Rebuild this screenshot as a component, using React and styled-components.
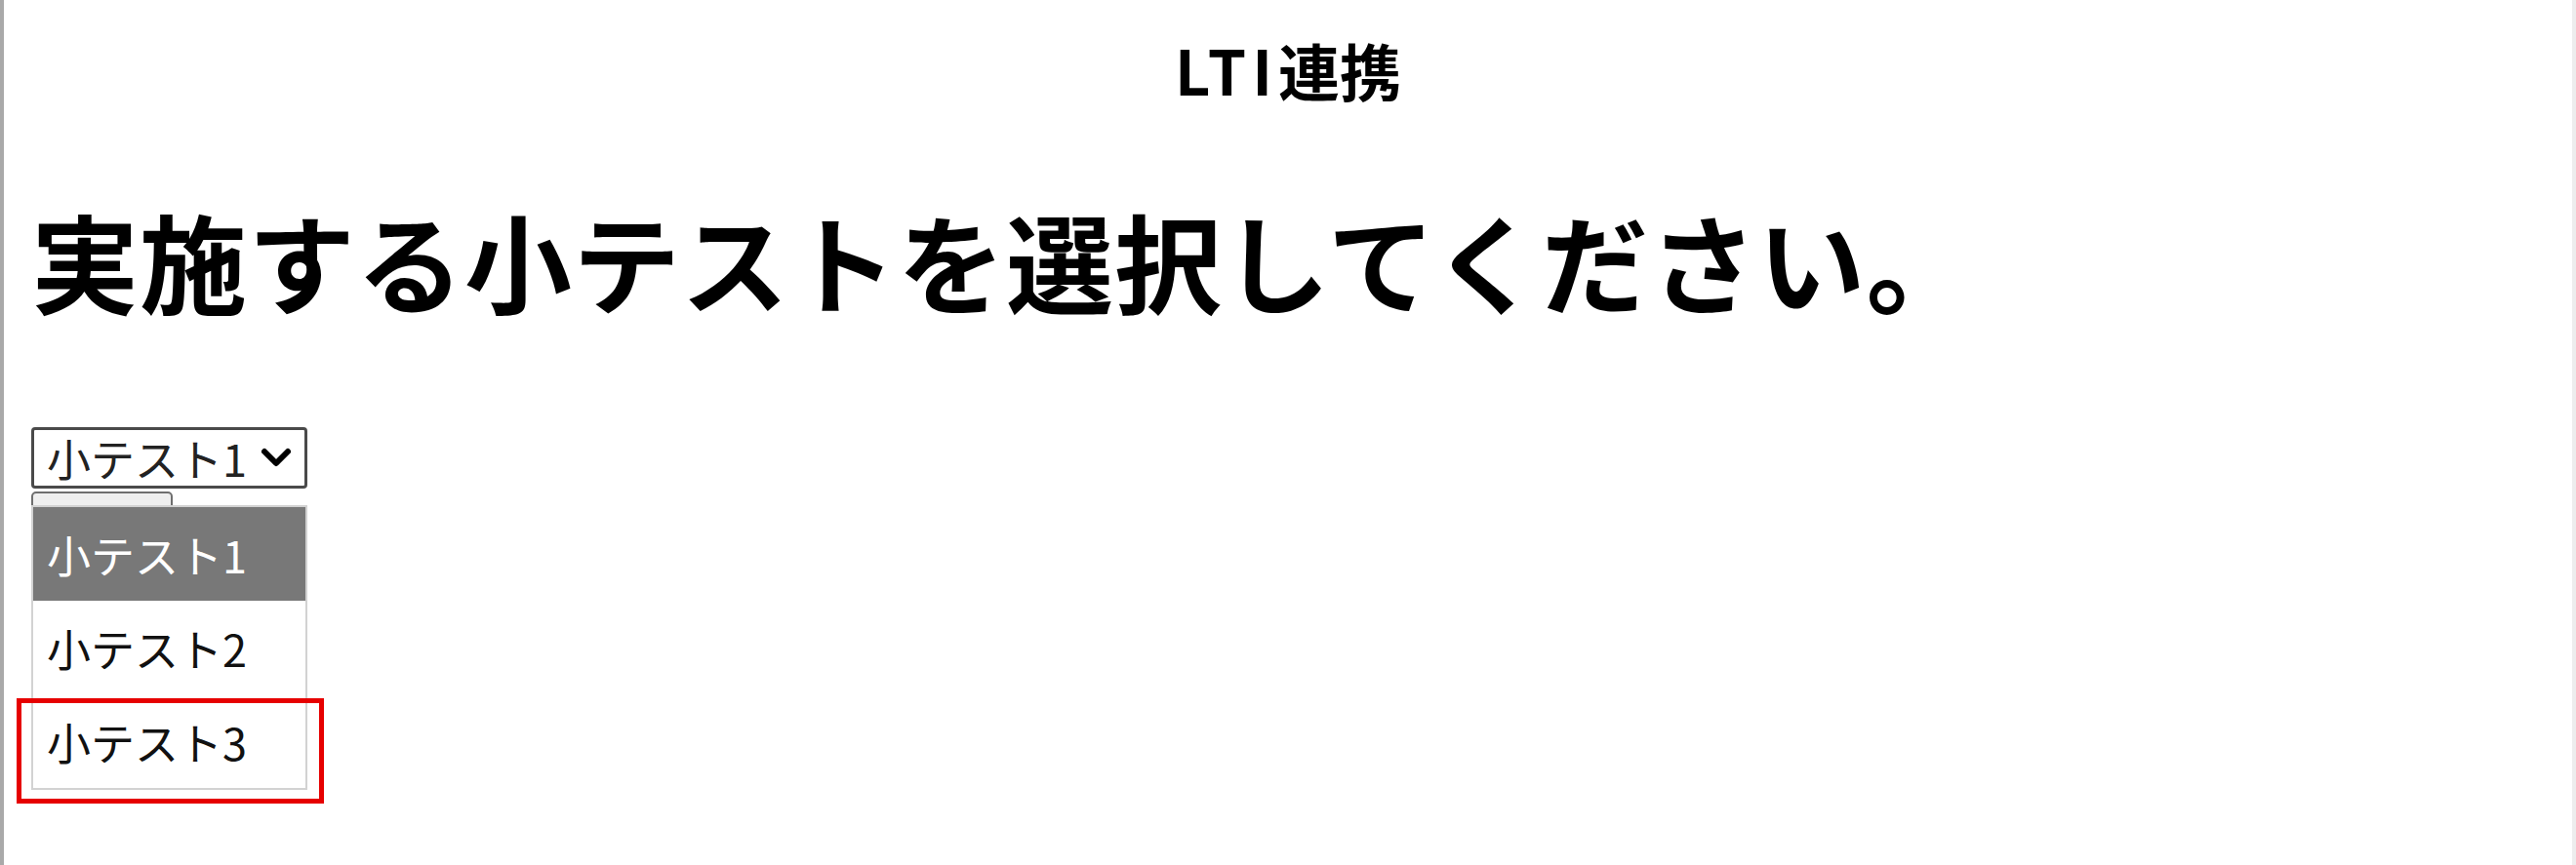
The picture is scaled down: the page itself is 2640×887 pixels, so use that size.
import React from "react";
import { styled, createGlobalStyle } from "styled-components";

const GlobalStyle = createGlobalStyle`
  html, body {
    margin: 0;
    padding: 0;
    background: #ffffff;
  }
  body {
    font-family: "Noto Sans CJK JP", "Noto Sans", sans-serif;
    color: #000;
  }
`;

const Page = styled.div`
  box-sizing: border-box;
  min-height: 887px;
  border-left: 4px solid #a9a9a9;
  border-right: 4px solid #ededed;
  padding: 39px 0 0 28px;
`;

const Title = styled.h3`
  margin: 0;
  font-size: 63px;
  line-height: 1;
  font-weight: 700;
  text-align: center;
  padding-right: 28px;
`;

const Latin = styled.span`
  letter-spacing: 6px;
`;

const Heading = styled.h1`
  margin: 109px 0 0 0;
  font-size: 110px;
  line-height: 1;
  font-weight: 700;
  letter-spacing: 1px;
`;

const SelectArea = styled.div`
  position: relative;
  margin-top: 117px;
  width: 300px;
`;

const SelectBox = styled.div`
  box-sizing: border-box;
  width: 283px;
  height: 63px;
  border: 3px solid #4a4a4a;
  border-radius: 4px;
  padding: 0 12px 0 13px;
  display: flex;
  align-items: center;
  justify-content: space-between;
  font-size: 45px;
  color: #222;
  background: #fff;
`;

const Chevron = styled.svg`
  width: 34px;
  height: 24px;
  flex: none;
`;

const SubmitButton = styled.div`
  box-sizing: border-box;
  margin-top: 3px;
  width: 145px;
  height: 60px;
  border: 2px solid #6f6f6f;
  border-radius: 5px;
  background: #efefef;
`;

const OptionList = styled.ul`
  position: absolute;
  top: 80px;
  left: 0;
  box-sizing: border-box;
  width: 283px;
  margin: 0;
  padding: 0;
  list-style: none;
  border: 2px solid #d2d2d2;
  background: #fff;
`;

const OptionItem = styled.li`
  height: 96px;
  display: flex;
  align-items: center;
  padding-left: 14px;
  font-size: 45px;
  color: ${(p) => (p.$active ? "#ffffff" : "#111111")};
  background: ${(p) => (p.$active ? "#787878" : "transparent")};
`;

const Highlight = styled.div`
  position: absolute;
  left: -15px;
  top: 278px;
  box-sizing: border-box;
  width: 315px;
  height: 108px;
  border: 5px solid #e60000;
  pointer-events: none;
`;

const options = ["小テスト1", "小テスト2", "小テスト3"];

export default function App() {
  return (
    <>
      <GlobalStyle />
      <Page>
        <Title>
          <Latin>LTI</Latin>連携
        </Title>
        <Heading>実施する小テストを選択してください。</Heading>
        <SelectArea>
          <SelectBox role="combobox" aria-expanded="true">
            <span>{options[0]}</span>
            <Chevron viewBox="0 0 34 24">
              <polyline
                points="5,5 17,17 29,5"
                fill="none"
                stroke="#000"
                strokeWidth="6"
                strokeLinecap="round"
                strokeLinejoin="round"
              />
            </Chevron>
          </SelectBox>
          <SubmitButton />
          <OptionList role="listbox">
            {options.map((o, i) => (
              <OptionItem key={o} $active={i === 0}>
                {o}
              </OptionItem>
            ))}
          </OptionList>
          <Highlight />
        </SelectArea>
      </Page>
    </>
  );
}
